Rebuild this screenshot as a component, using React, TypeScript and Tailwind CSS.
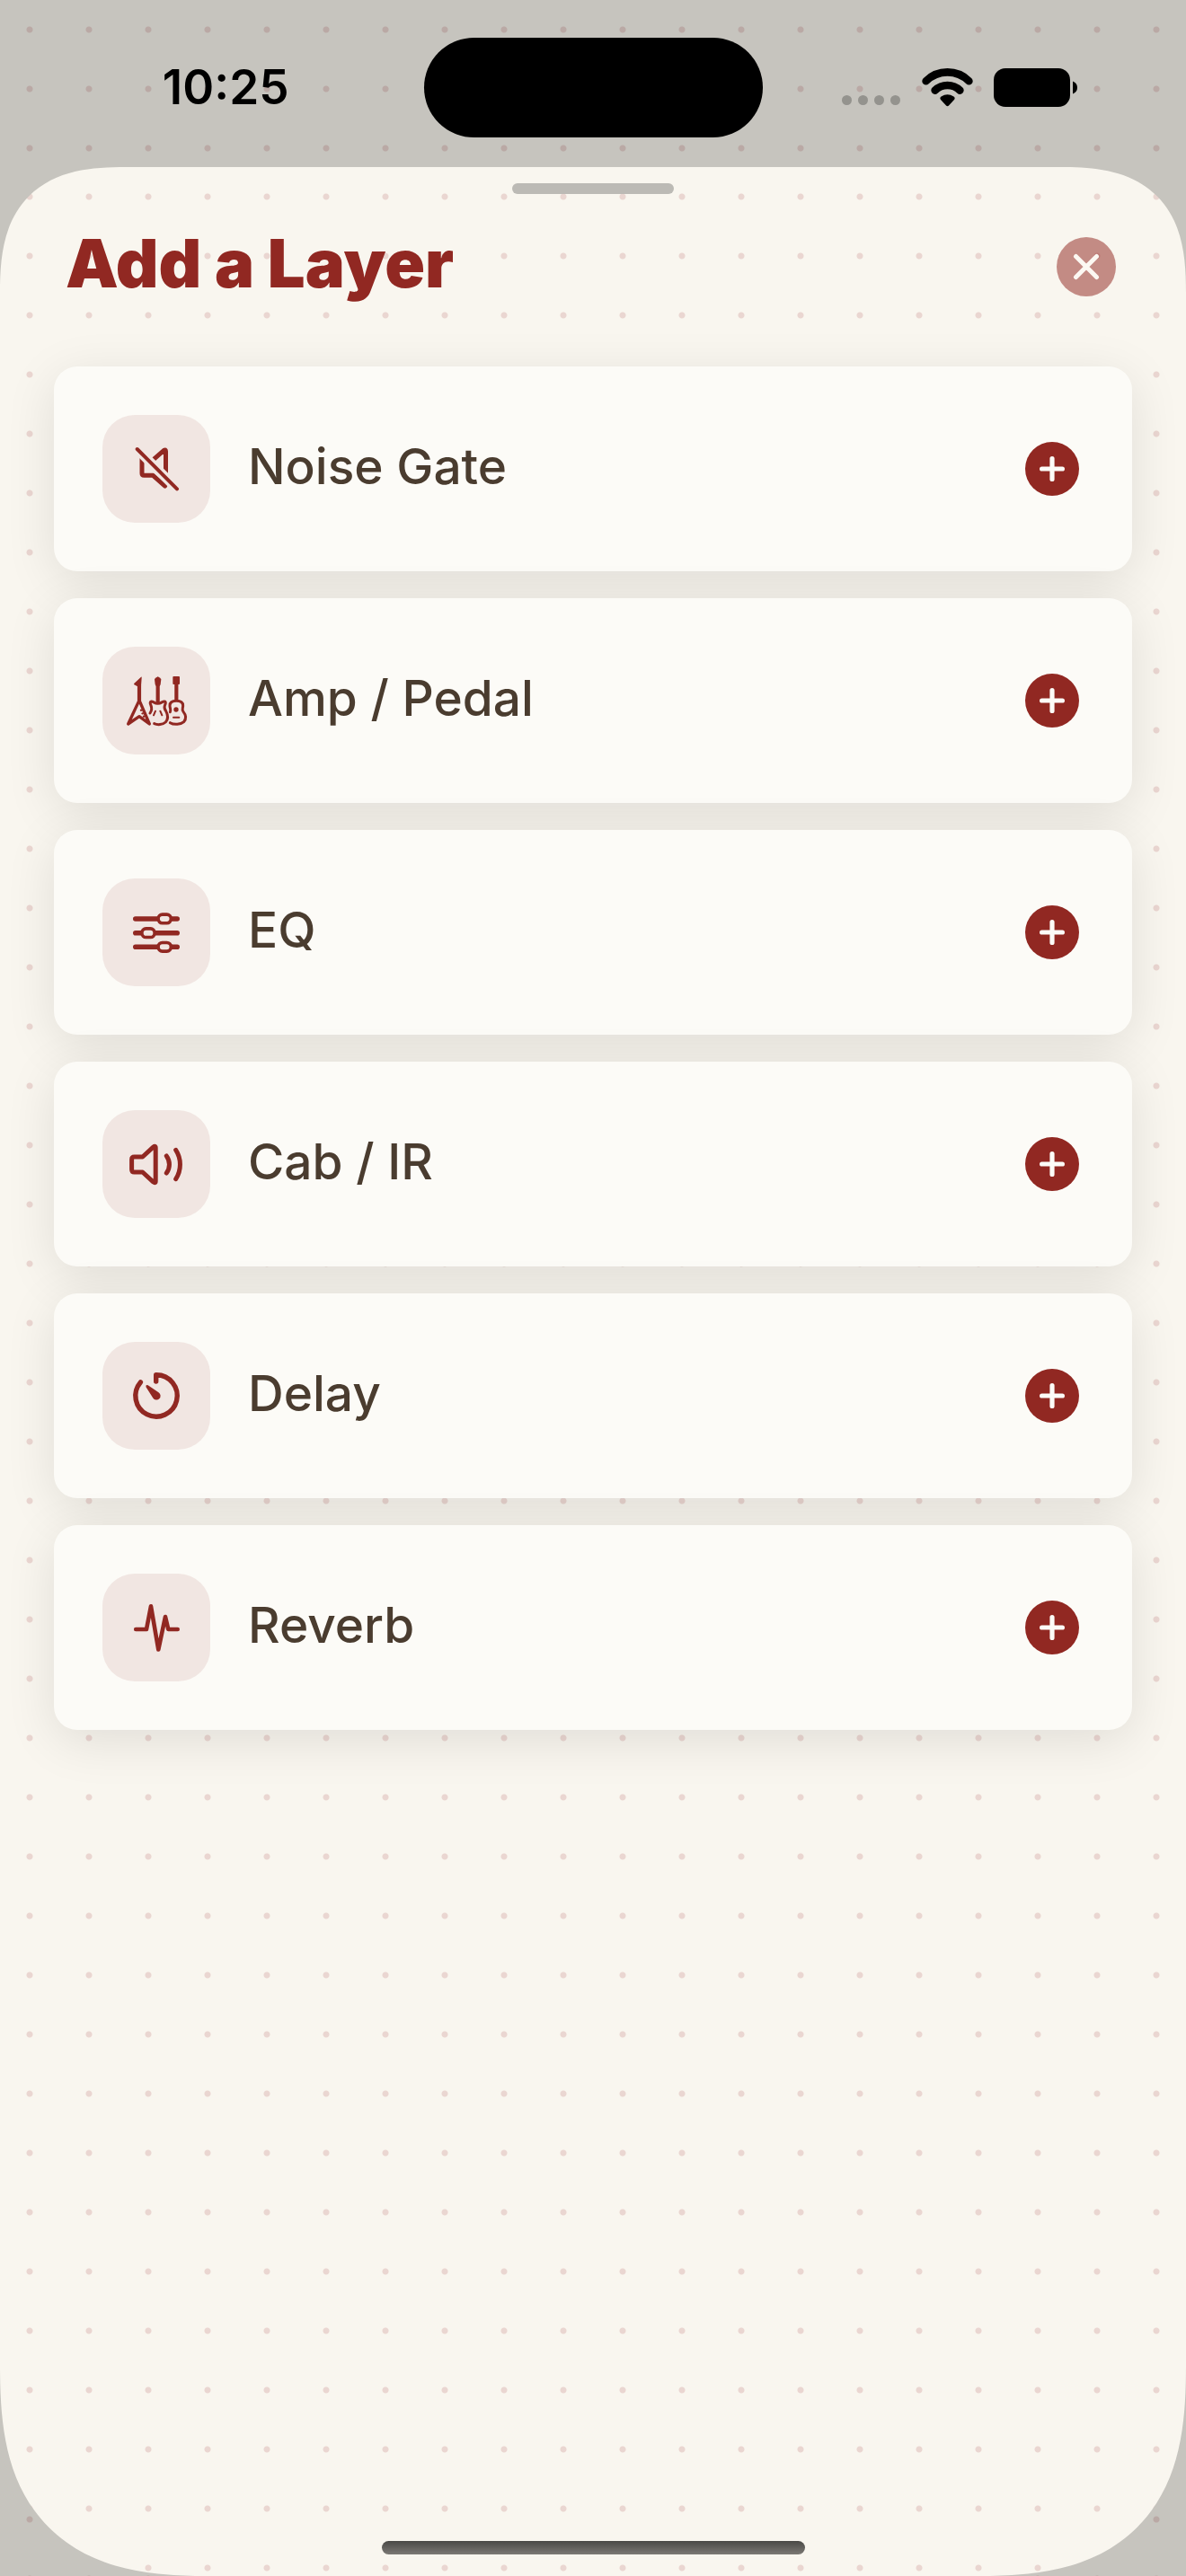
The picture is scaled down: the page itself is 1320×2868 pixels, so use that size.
import React, { ReactNode } from "react";

type Layer = {
  name: string;
  icon: ReactNode;
};

const NoiseGateIcon = () => (
  <svg viewBox="0 0 120 120" fill="none" className="size-full" aria-hidden="true">
    <g stroke="#912822" strokeWidth="5" strokeLinecap="round" strokeLinejoin="round">
      <path d="M44 48V65Q44 67.3 46.3 67.3H56.3L69.6 79.2" />
      <path d="M54 52L68.5 39.4Q70.5 38 70.5 40.5V66" />
    </g>
    <path d="M36 35.3L88 87.3" stroke="#f1e6e2" strokeWidth="10.8" />
    <path d="M38.7 38L83 82.3" stroke="#912822" strokeWidth="4" strokeLinecap="round" />
  </svg>
);

const GuitarsIcon = () => (
  <svg viewBox="0 0 360 360" fill="none" className="size-full" aria-hidden="true">
    <g fill="#912822">
      <path d="M129 101Q132 100 131 104L129 132H116L105 126Q105 123 108 121Z" />
      <path d="M185 100Q192 103 196 108L194 126L191 132H179L176 126L174 108Q178 103 185 100Z" />
      <rect x="235" y="99" width="23" height="27" rx="3" />
      <circle cx="129" cy="212" r="3.5" />
      <circle cx="134" cy="223" r="3.5" />
      <circle cx="138" cy="233" r="3.5" />
      <circle cx="246" cy="210" r="8" />
    </g>
    <g stroke="#912822" strokeLinecap="round" strokeLinejoin="round">
      <path d="M123 128V180M185 130V188M247 124V180" strokeWidth="12.5" strokeLinecap="butt" />
      <path d="M123 179L86 258L123 233L157 258Z" strokeWidth="10" />
      <path
        d="M159 222C166 212 166 206 162 196C159 189 158 184 163 183C170 182 173 190 185 190C197 190 200 182 207 183C213 184 211 190 208 197C205 205 207 208 212 215C220 230 219 243 211 252C201 261 184 262 173 257"
        strokeWidth="9"
      />
      <path d="M177 215L171 229M193 215L199 229" strokeWidth="6" />
      <path
        d="M226 218C230 211 225 205 225 197C225 184 234 181 247 181C260 181 269 184 269 197C269 205 264 210 270 217C279 228 280 241 272 251C262 260 239 262 226 254"
        strokeWidth="9"
      />
      <path d="M237 236H256" strokeWidth="6" />
    </g>
  </svg>
);

const EqIcon = () => (
  <svg viewBox="0 0 120 120" fill="none" className="size-full" aria-hidden="true">
    <path
      d="M36.8 45H83.2M36.8 60.7H83.2M36.8 76.3H83.2"
      stroke="#912822"
      strokeWidth="5.6"
      strokeLinecap="round"
    />
    <g fill="#f1e6e2" stroke="#912822" strokeWidth="3.6">
      <rect x="62.1" y="40.1" width="14.2" height="9.6" rx="4.6" />
      <rect x="43.9" y="55.9" width="14.2" height="9.6" rx="4.6" />
      <rect x="62.1" y="71.5" width="14.2" height="9.6" rx="4.6" />
    </g>
  </svg>
);

const CabIcon = () => (
  <svg viewBox="0 0 120 120" fill="none" className="size-full" aria-hidden="true">
    <g stroke="#912822" strokeWidth="5" strokeLinecap="round" strokeLinejoin="round">
      <path d="M35.5 52H44.7L56.5 41.2Q59.2 39 59.2 42V79Q59.2 82 56.5 79.8L44.7 69H35.5Q32.6 69 32.6 66V55Q32.6 52 35.5 52Z" />
      <path d="M71.3 50.9A16.2 16.2 0 0 1 71.3 70.1" />
      <path d="M81.7 44.4A29.7 29.7 0 0 1 81.7 76.6" />
    </g>
  </svg>
);

const DelayIcon = () => (
  <svg viewBox="0 0 120 120" fill="none" className="size-full" aria-hidden="true">
    <path
      d="M59.7 44V36.8H60A23.2 23.2 0 1 1 42.4 44.9"
      stroke="#912822"
      strokeWidth="5.4"
      strokeLinecap="round"
      strokeLinejoin="round"
    />
    <path
      d="M48.5 50.2Q47.8 47.4 50.7 48.2L62.5 56.2A4.5 4.5 0 1 1 56.3 62.4Z"
      fill="#912822"
    />
  </svg>
);

const ReverbIcon = () => (
  <svg viewBox="0 0 120 120" fill="none" className="size-full" aria-hidden="true">
    <path
      d="M37.2 62H49L54 36.3L62.3 84.5L70 48L73.3 62H83.7"
      stroke="#912822"
      strokeWidth="4.6"
      strokeLinecap="round"
      strokeLinejoin="round"
    />
  </svg>
);

const layers: Layer[] = [
  { name: "Noise Gate", icon: <NoiseGateIcon /> },
  { name: "Amp / Pedal", icon: <GuitarsIcon /> },
  { name: "EQ", icon: <EqIcon /> },
  { name: "Cab / IR", icon: <CabIcon /> },
  { name: "Delay", icon: <DelayIcon /> },
  { name: "Reverb", icon: <ReverbIcon /> },
];

const StatusBar = () => (
  <header className="grid h-[186px] grid-cols-[1fr_377px_1fr] items-start pt-[42px]">
    <div className="flex h-[111px] items-center justify-end pr-[150px]">
      <time className="text-[53px] leading-none font-semibold text-black">10:25</time>
    </div>
    <div className="h-[111px] rounded-full bg-black" />
    <div className="flex h-[111px] items-center pl-[88px]">
      <div className="mt-7 flex gap-[7px]">
        <span className="size-[11px] rounded-full bg-[#94938e]" />
        <span className="size-[11px] rounded-full bg-[#94938e]" />
        <span className="size-[11px] rounded-full bg-[#94938e]" />
        <span className="size-[11px] rounded-full bg-[#94938e]" />
      </div>
      <svg viewBox="0 0 57 43" fill="none" className="ml-6 h-[43px] w-[57px]" aria-hidden="true">
        <path
          d="M4.6 14.2A34 34 0 0 1 52.4 14.2M14.6 24.6A20 20 0 0 1 42.4 24.6"
          stroke="#000"
          strokeWidth="8.6"
          strokeLinecap="round"
        />
        <path
          d="M21 35Q19.5 33 21.5 31.5Q28.5 27 35.5 31.5Q37.5 33 36 35L30 41.5Q28.5 43 27 41.5Z"
          fill="#000"
        />
      </svg>
      <svg viewBox="0 0 94 43" className="ml-[23px] h-[43px] w-[94px]" aria-hidden="true">
        <rect width="85" height="43" rx="13" />
        <path d="M88 14.5Q93 16.5 93 21.5T88 28.5Z" />
      </svg>
    </div>
  </header>
);

const LayerRow: React.FC<Layer> = ({ name, icon }) => (
  <li className="flex items-center rounded-[26px] bg-[#fcfbf7] py-[54px] pr-[59px] pl-[54px] shadow-[0_12px_56px_rgba(0,0,0,0.1)]">
    <div className="size-[120px] shrink-0 rounded-[36px] bg-[#f1e6e2]">{icon}</div>
    <span className="ml-[42px] flex-1 pb-1.5 text-[55px] leading-none font-medium text-[#4a3c2f]">
      {name}
    </span>
    <button
      type="button"
      aria-label={`Add ${name}`}
      className="flex size-[60px] items-center justify-center rounded-full bg-[#912822]"
    >
      <svg viewBox="0 0 28 28" className="size-7" aria-hidden="true">
        <path d="M14 2.6V25.4M2.6 14H25.4" stroke="#fcfbf7" strokeWidth="5.2" strokeLinecap="round" />
      </svg>
    </button>
  </li>
);

const App: React.FC = () => {
  return (
    <div className="flex min-h-screen flex-col bg-[#c6c4be] bg-[radial-gradient(circle,#baa9a5_3px,transparent_4px)] bg-[size:66px_66px] font-['Inter',sans-serif]">
      <StatusBar />
      <main className="flex flex-1 flex-col rounded-t-[109px] rounded-b-[183px] bg-[#f9f6ef] bg-[radial-gradient(circle,#ead6d1_3px,transparent_4px)] bg-[size:66px_66px] supports-[corner-shape:squircle]:rounded-t-[140px] supports-[corner-shape:squircle]:rounded-b-[235px] supports-[corner-shape:squircle]:[corner-shape:superellipse(1.4)]">
        <div className="mx-auto mt-[18px] h-3 w-[180px] rounded-full bg-[#bcbab5]" />
        <div className="mt-12 flex items-start justify-between pr-[78px] pl-[73px]">
          <h1 className="text-[74px] leading-[58px] font-black text-[#912822]">Add a Layer</h1>
          <button
            type="button"
            aria-label="Close"
            className="flex size-[66px] items-center justify-center rounded-full bg-[#912822]/52"
          >
            <svg viewBox="0 0 30 30" className="size-[30px]" aria-hidden="true">
              <path
                d="M3.5 3.5L26.5 26.5M26.5 3.5L3.5 26.5"
                stroke="#fcf8f2"
                strokeWidth="5"
                strokeLinecap="round"
              />
            </svg>
          </button>
        </div>
        <ul className="mt-[78px] flex flex-col gap-[30px] px-[60px]">
          {layers.map((layer) => (
            <LayerRow key={layer.name} {...layer} />
          ))}
        </ul>
        <div className="mx-auto mt-auto mb-6 h-[15px] w-[471px] rounded-full bg-linear-to-b from-[#4a4946] to-[#7c7975]" />
      </main>
    </div>
  );
};

export default App;
